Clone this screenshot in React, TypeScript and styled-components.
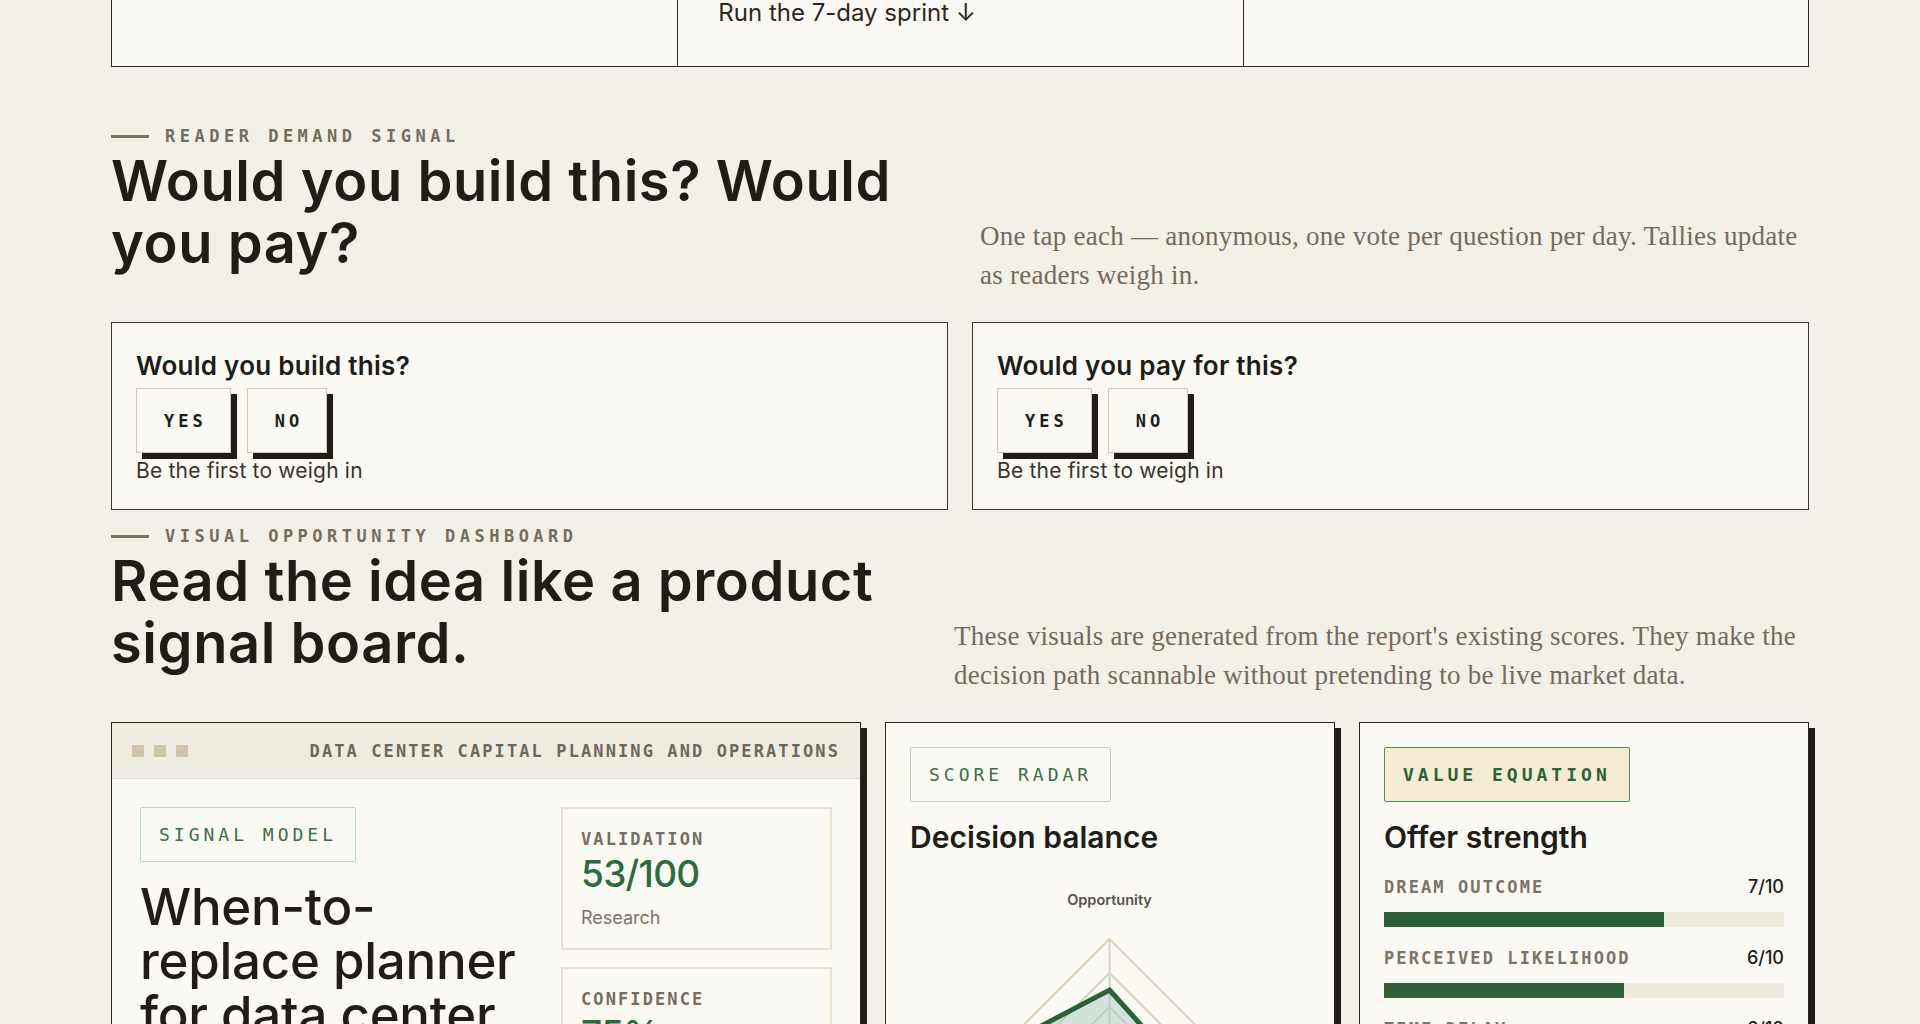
import styled, { createGlobalStyle } from "styled-components";

const GlobalStyle = createGlobalStyle`
  html, body {
    margin: 0;
    padding: 0;
    background: #f3f0e8;
    overflow: hidden;
  }
  body {
    font-family: Inter, "Noto Sans", sans-serif;
    color: #201d18;
  }
  * { box-sizing: border-box; }
`;

const MONO = `"DejaVu Sans Mono", "Liberation Mono", monospace`;
const INK = "#201d18";
const GREEN = "#2d6a3e";
const CARD = "#faf9f4";

const Page = styled.div`
  width: 1698px;
  margin: 0 auto;
`;

const SprintStrip = styled.div`
  display: grid;
  grid-template-columns: repeat(3, 1fr);
  height: 67px;
  background: ${CARD};
  border: 1.5px solid #2b2822;
  border-top: none;
`;

const SprintCell = styled.div`
  padding: 0 40px;
  font-size: 24px;
  line-height: 26px;
  color: #2b2822;
  & + & {
    border-left: 1.5px solid #2b2822;
  }
`;

const Section = styled.section<{ $top: number }>`
  padding-top: ${(p) => p.$top}px;
`;

const SectionHead = styled.div<{ $left: number }>`
  display: grid;
  grid-template-columns: ${(p) => p.$left}px 1fr;
  column-gap: 40px;
  align-items: end;
  margin-bottom: 27px;
`;

const HeadBlock = styled.div`
  padding-bottom: 21px;
`;

const Eyebrow = styled.div`
  display: flex;
  align-items: center;
  gap: 16px;
  font-family: ${MONO};
  font-weight: 700;
  font-size: 17px;
  letter-spacing: 4.5px;
  line-height: 20px;
  color: #746d60;
  text-transform: uppercase;
  &::before {
    content: "";
    width: 38px;
    height: 3px;
    background: #7a7362;
  }
`;

const BigTitle = styled.h2`
  margin: 4px 0 0;
  font-size: 56px;
  font-weight: 600;
  line-height: 62px;
  letter-spacing: 0.01em;
  color: ${INK};
`;

const Lede = styled.p`
  margin: 0;
  font-family: "Liberation Serif", serif;
  font-size: 27px;
  line-height: 39px;
  letter-spacing: 0.25px;
  color: #726b5e;
`;

const VoteGrid = styled.div`
  display: grid;
  grid-template-columns: 1fr 1fr;
  gap: 24px;
`;

const VoteCard = styled.div`
  height: 188px;
  padding: 29px 24px 0;
  background: ${CARD};
  border: 1.5px solid #3a362f;
`;

const VoteQuestion = styled.h3`
  margin: 0 0 8px;
  font-size: 26px;
  font-weight: 600;
  line-height: 28px;
  letter-spacing: 0.01em;
  color: ${INK};
`;

const VoteButtons = styled.div`
  display: flex;
  gap: 16px;
`;

const VoteButton = styled.button`
  height: 65px;
  padding: 0 23px 0 27px;
  background: ${CARD};
  border: 1.5px solid #d2c9b3;
  box-shadow: 6px 6px 0 #201d18;
  font-family: ${MONO};
  font-weight: 700;
  font-size: 17px;
  letter-spacing: 4px;
  color: ${INK};
  cursor: pointer;
`;

const VoteNote = styled.div`
  margin-top: 7px;
  font-size: 21px;
  line-height: 22px;
  letter-spacing: 0.2px;
  color: #39342c;
`;

const Dashboard = styled.div`
  display: grid;
  grid-template-columns: 5fr 3fr 3fr;
  gap: 24px;
  align-items: start;
`;

const Panel = styled.div<{ $pad?: boolean }>`
  background: ${CARD};
  border: 1.5px solid #2b2822;
  box-shadow: 6px 6px 0 #201d18;
  padding: ${(p) => (p.$pad ? "24px" : "0")};
  min-height: 420px;
`;

const WindowBar = styled.div`
  display: flex;
  align-items: center;
  justify-content: space-between;
  height: 56px;
  padding: 0 20px;
  background: #efece2;
  border-bottom: 1.5px solid #e2dccb;
`;

const Dots = styled.div`
  display: flex;
  gap: 10px;
  & span {
    width: 12px;
    height: 12px;
    background: #cfc6a9;
  }
`;

const BarTitle = styled.div`
  font-family: ${MONO};
  font-weight: 700;
  font-size: 17px;
  letter-spacing: 2.1px;
  color: #6e675b;
`;

const PanelBody = styled.div`
  display: grid;
  grid-template-columns: minmax(0, 1fr) 271px;
  gap: 32px;
  padding: 28px;
`;

const Tag = styled.div<{ $tone: "mint" | "sage" | "cream" }>`
  display: inline-block;
  padding: 16.5px 18px;
  font-family: ${MONO};
  font-size: 18px;
  line-height: 20px;
  letter-spacing: 4px;
  font-weight: ${(p) => (p.$tone === "cream" ? 700 : 400)};
  color: ${(p) => (p.$tone === "cream" ? "#2a6438" : "#3b7048")};
  background: ${(p) => (p.$tone === "cream" ? "#f6ebd3" : "transparent")};
  border: 1.5px solid
    ${(p) =>
      p.$tone === "mint" ? "#b7d7c7" : p.$tone === "sage" ? "#bfd5ae" : "#4f8c5c"};
  border-radius: 2px;
`;

const IdeaTitle = styled.h3`
  margin: 18px 0 0;
  font-size: 51px;
  font-weight: 500;
  line-height: 54px;
  letter-spacing: -0.005em;
  color: ${INK};
`;

const Metrics = styled.div`
  display: flex;
  flex-direction: column;
  gap: 17px;
`;

const Metric = styled.div`
  padding: 19px 18px 20px;
  border: 2px solid #e9e2d0;
`;

const MetricLabel = styled.div`
  font-family: ${MONO};
  font-weight: 700;
  font-size: 17px;
  line-height: 22px;
  letter-spacing: 2.1px;
  color: #756f63;
`;

const MetricValue = styled.div`
  margin-top: 4px;
  font-size: 37px;
  font-weight: 500;
  line-height: 40px;
  letter-spacing: -0.02em;
  color: ${GREEN};
`;

const MetricNote = styled.div`
  margin-top: 14px;
  font-size: 18px;
  line-height: 20px;
  color: #7a7367;
`;

const PanelTitle = styled.h3`
  margin: 17px 0 0;
  font-size: 30px;
  font-weight: 600;
  line-height: 36px;
  color: ${INK};
`;

const RadarBox = styled.div`
  margin-top: 16px;
`;

const Rows = styled.div`
  display: flex;
  flex-direction: column;
  gap: 21px;
  margin-top: 22px;
`;

const RowHead = styled.div`
  display: flex;
  justify-content: space-between;
  align-items: center;
  line-height: 20px;
`;

const RowLabel = styled.span`
  font-family: ${MONO};
  font-weight: 700;
  font-size: 17px;
  letter-spacing: 2.1px;
  color: #7a7367;
`;

const RowScore = styled.span`
  font-size: 18px;
  font-weight: 500;
  color: ${INK};
`;

const Track = styled.div`
  margin-top: 15px;
  height: 15px;
  background: #eeebe0;
`;

const Fill = styled.div<{ $pct: number }>`
  width: ${(p) => p.$pct}%;
  height: 100%;
  background: #2d5e37;
`;

const offer = [
  { label: "DREAM OUTCOME", score: 7 },
  { label: "PERCEIVED LIKELIHOOD", score: 6 },
  { label: "TIME DELAY", score: 6 },
  { label: "EFFORT & SACRIFICE", score: 5 },
];

const radarAxes = [
  { label: "Opportunity", v: 0.5 },
  { label: "Feasibility", v: 0.45 },
  { label: "Timing", v: 0.7 },
  { label: "Demand", v: 0.95 },
];

function Radar() {
  const w = 399;
  const cx = w / 2;
  const cy = 170;
  const R = 102;
  const pt = (i: number, r: number) => {
    const a = -Math.PI / 2 + (i * Math.PI) / 2;
    return [cx + Math.cos(a) * r, cy + Math.sin(a) * r];
  };
  const ring = (f: number) =>
    [0, 1, 2, 3].map((i) => pt(i, R * f).map((n) => n.toFixed(1)).join(",")).join(" ");
  const data = radarAxes
    .map((ax, i) => pt(i, R * ax.v).map((n) => n.toFixed(1)).join(","))
    .join(" ");
  const labelProps = {
    fontFamily: "Inter, sans-serif",
    fontSize: 14.5,
    fontWeight: 600,
    fill: "#55544b",
  };
  return (
    <svg width={w} height={320} viewBox={`0 0 ${w} 320`}>
      {[1, 2 / 3, 1 / 3].map((f) => (
        <polygon key={f} points={ring(f)} fill="none" stroke="#d9d0ba" strokeWidth={2} />
      ))}
      {[0, 1, 2, 3].map((i) => {
        const [x, y] = pt(i, R);
        return <line key={i} x1={cx} y1={cy} x2={x} y2={y} stroke="#d9d0ba" strokeWidth={2} />;
      })}
      <polygon
        points={data}
        fill="#a9cbbf"
        fillOpacity={0.5}
        stroke="#2b6136"
        strokeWidth={5}
        strokeLinejoin="miter"
      />
      <text x={cx} y={34} textAnchor="middle" {...labelProps}>
        Opportunity
      </text>
      <text x={cx + R + 14} y={cy + 5} textAnchor="start" {...labelProps}>
        Feasibility
      </text>
      <text x={cx} y={cy + R + 24} textAnchor="middle" {...labelProps}>
        Timing
      </text>
      <text x={cx - R - 14} y={cy + 5} textAnchor="end" {...labelProps}>
        Demand
      </text>
    </svg>
  );
}

function VoteBox({ question }: { question: string }) {
  return (
    <VoteCard>
      <VoteQuestion>{question}</VoteQuestion>
      <VoteButtons>
        <VoteButton>YES</VoteButton>
        <VoteButton>NO</VoteButton>
      </VoteButtons>
      <VoteNote>Be the first to weigh in</VoteNote>
    </VoteCard>
  );
}

export default function App() {
  return (
    <Page>
      <GlobalStyle />
      <SprintStrip>
        <SprintCell />
        <SprintCell>Run the 7-day sprint ↓</SprintCell>
        <SprintCell />
      </SprintStrip>

      <Section $top={59}>
        <SectionHead $left={829}>
          <HeadBlock>
            <Eyebrow>Reader demand signal</Eyebrow>
            <BigTitle>Would you build this? Would you pay?</BigTitle>
          </HeadBlock>
          <Lede>
            One tap each — anonymous, one vote per question per day. Tallies update as
            readers weigh in.
          </Lede>
        </SectionHead>
        <VoteGrid>
          <VoteBox question="Would you build this?" />
          <VoteBox question="Would you pay for this?" />
        </VoteGrid>
      </Section>

      <Section $top={16}>
        <SectionHead $left={803}>
          <HeadBlock>
            <Eyebrow>Visual opportunity dashboard</Eyebrow>
            <BigTitle>Read the idea like a product signal board.</BigTitle>
          </HeadBlock>
          <Lede>
            These visuals are generated from the report's existing scores. They make the
            decision path scannable without pretending to be live market data.
          </Lede>
        </SectionHead>

        <Dashboard>
          <Panel>
            <WindowBar>
              <Dots>
                <span />
                <span />
                <span />
              </Dots>
              <BarTitle>DATA CENTER CAPITAL PLANNING AND OPERATIONS</BarTitle>
            </WindowBar>
            <PanelBody>
              <div>
                <Tag $tone="mint">SIGNAL MODEL</Tag>
                <IdeaTitle>When-to-replace planner for data center operators</IdeaTitle>
              </div>
              <Metrics>
                <Metric>
                  <MetricLabel>VALIDATION</MetricLabel>
                  <MetricValue>53/100</MetricValue>
                  <MetricNote>Research</MetricNote>
                </Metric>
                <Metric>
                  <MetricLabel>CONFIDENCE</MetricLabel>
                  <MetricValue>75%</MetricValue>
                  <MetricNote>Evidence</MetricNote>
                </Metric>
              </Metrics>
            </PanelBody>
          </Panel>

          <Panel $pad>
            <Tag $tone="sage">SCORE RADAR</Tag>
            <PanelTitle>Decision balance</PanelTitle>
            <RadarBox>
              <Radar />
            </RadarBox>
          </Panel>

          <Panel $pad>
            <Tag $tone="cream">VALUE EQUATION</Tag>
            <PanelTitle>Offer strength</PanelTitle>
            <Rows>
              {offer.map((row) => (
                <div key={row.label}>
                  <RowHead>
                    <RowLabel>{row.label}</RowLabel>
                    <RowScore>{row.score}/10</RowScore>
                  </RowHead>
                  <Track>
                    <Fill $pct={row.score * 10} />
                  </Track>
                </div>
              ))}
            </Rows>
          </Panel>
        </Dashboard>
      </Section>
    </Page>
  );
}
